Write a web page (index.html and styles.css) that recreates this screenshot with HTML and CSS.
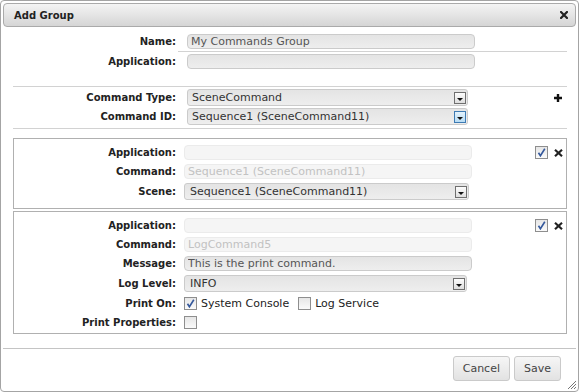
FILE: index.html
```html
<!DOCTYPE html>
<html lang="en">
<head>
  <meta charset="UTF-8" />
  <title>Add Group</title>
  <link rel="stylesheet" href="styles.css">
</head>
<body>
  <div class="dialog">
    <div class="titlebar">
      <span class="title">Add Group</span>
      <span class="close">
        <svg width="8" height="8" viewBox="0 0 8 8"><path d="M1 1L7 7M7 1L1 7" stroke="#222" stroke-width="2.2" stroke-linecap="square"/></svg>
      </span>
    </div>

    <div class="content">
      <div class="row row-top">
        <label class="lbl">Name:</label>
        <div class="cell underline"><input class="txt" type="text" value="My Commands Group"></div>
      </div>
      <div class="row row-app">
        <label class="lbl">Application:</label>
        <div class="cell"><input class="txt" type="text" value=""></div>
      </div>
      <div class="sep sep-1"></div>
      <div class="row row-type">
        <label class="lbl lbl-sel">Command Type:</label>
        <div class="cell">
          <div class="select"><span>SceneCommand</span><span class="drop"></span></div>
          <span class="plus">
            <svg width="8" height="8" viewBox="0 0 8 8"><path d="M4 0V8M0 4H8" stroke="#111" stroke-width="2.4"/></svg>
          </span>
        </div>
      </div>
      <div class="row row-id">
        <label class="lbl lbl-sel">Command ID:</label>
        <div class="cell">
          <div class="select"><span>Sequence1 (SceneCommand11)</span><span class="drop focus"></span></div>
        </div>
      </div>
      <div class="sep sep-2"></div>

      <div class="box box-1">
        <div class="fields">
          <div class="row">
            <label class="lbl">Application:</label>
            <div class="cell"><input class="txt" type="text" value="" disabled></div>
          </div>
          <div class="row">
            <label class="lbl">Command:</label>
            <div class="cell"><input class="txt" type="text" value="Sequence1 (SceneCommand11)" disabled></div>
          </div>
          <div class="row">
            <label class="lbl lbl-sel">Scene:</label>
            <div class="cell">
              <div class="select"><span>Sequence1 (SceneCommand11)</span><span class="drop"></span></div>
            </div>
          </div>
        </div>
        <div class="tools">
          <span class="check on"><svg width="9" height="9" viewBox="0 0 9 9"><path d="M1.5 4.8L3.4 7.8L7.8 0.8" fill="none" stroke="#34589c" stroke-width="1.6"/></svg></span>
          <span class="remove"><svg width="9" height="8" viewBox="0 0 9 8"><path d="M1 0.8L8 7.2M8 0.8L1 7.2" stroke="#222" stroke-width="2.2"/></svg></span>
        </div>
      </div>

      <div class="box box-2">
        <div class="fields">
          <div class="row">
            <label class="lbl">Application:</label>
            <div class="cell"><input class="txt" type="text" value="" disabled></div>
          </div>
          <div class="row">
            <label class="lbl">Command:</label>
            <div class="cell"><input class="txt" type="text" value="LogCommand5" disabled></div>
          </div>
          <div class="row">
            <label class="lbl">Message:</label>
            <div class="cell"><input class="txt" type="text" value="This is the print command."></div>
          </div>
          <div class="row">
            <label class="lbl lbl-sel">Log Level:</label>
            <div class="cell">
              <div class="select select-level"><span>INFO</span><span class="drop"></span></div>
            </div>
          </div>
          <div class="row">
            <label class="lbl">Print On:</label>
            <div class="cell opts">
              <span class="check on"><svg width="9" height="9" viewBox="0 0 9 9"><path d="M1.5 4.8L3.4 7.8L7.8 0.8" fill="none" stroke="#34589c" stroke-width="1.6"/></svg></span>
              <span class="opt">System Console</span>
              <span class="check"></span>
              <span class="opt">Log Service</span>
            </div>
          </div>
          <div class="row">
            <label class="lbl">Print Properties:</label>
            <div class="cell opts"><span class="check"></span></div>
          </div>
        </div>
        <div class="tools">
          <span class="check on"><svg width="9" height="9" viewBox="0 0 9 9"><path d="M1.5 4.8L3.4 7.8L7.8 0.8" fill="none" stroke="#34589c" stroke-width="1.6"/></svg></span>
          <span class="remove"><svg width="9" height="8" viewBox="0 0 9 8"><path d="M1 0.8L8 7.2M8 0.8L1 7.2" stroke="#222" stroke-width="2.2"/></svg></span>
        </div>
      </div>
    </div>

    <div class="footer">
      <button class="btn">Cancel</button>
      <button class="btn">Save</button>
    </div>

    <span class="grip">
      <svg width="9" height="9" viewBox="0 0 9 9"><path d="M9 1L1 9M9 4L4 9M9 7L7 9" stroke="#777" stroke-width="1"/></svg>
    </span>
  </div>
</body>
</html>
```

FILE: styles.css
```css
* {
  box-sizing: border-box;
}
body {
  margin: 0;
  font-family: "DejaVu Sans", Verdana, sans-serif;
  font-size: 11px;
  color: #222;
  background: #fff;
}
.dialog {
  position: relative;
  width: 579px;
  height: 392px;
  border: 1px solid #a4a4a4;
  border-radius: 4px;
  padding: 2px;
  display: flex;
  flex-direction: column;
  background: #fff;
}
.titlebar {
  height: 24px;
  border: 1px solid #aaa;
  border-radius: 4px;
  background: linear-gradient(#f4f4f4, #d5d5d5);
  display: flex;
  align-items: center;
  justify-content: space-between;
  padding: 0 7px 0 10px;
}
.title {
  font-size: 10px;
  font-weight: bold;
  color: #222;
}
.close {
  display: flex;
}

.content {
  flex: 1;
  padding: 7px 9px 0 10px;
}
.row {
  display: flex;
  align-items: center;
}
.row-top {
  align-items: flex-start;
}
.row-app {
  margin-top: 2px;
}
.row-type {
  margin-top: 2px;
}
.row-id {
  margin-top: 2px;
}
.lbl {
  width: 165px;
  padding-right: 2px;
  text-align: right;
  font-size: 10px;
  font-weight: bold;
  line-height: 15px;
  color: #222;
}
.cell {
  flex: 1;
  display: flex;
  align-items: center;
  padding-left: 9px;
}
.underline {
  border-bottom: 1px solid #d2d2d2;
  padding-bottom: 2px;
}
.sep {
  border-top: 1px solid #d2d2d2;
}
.sep-1 {
  margin-top: 17px;
}
.sep-2 {
  margin-top: 3px;
}

.txt {
  width: 288px;
  height: 15px;
  margin: 0;
  padding: 0 3px;
  border: 1px solid #cbcbcb;
  border-radius: 4px;
  background: linear-gradient(#e4e4e4, #eeeeee);
  font-family: "DejaVu Sans", Verdana, sans-serif;
  font-size: 11px;
  color: #555;
  outline: none;
}
.txt:disabled {
  border-color: #ebebeb;
  background: #f5f5f5;
  color: #c2c2c2;
}
.select {
  width: 281px;
  height: 17px;
  display: flex;
  align-items: center;
  padding: 0 1px 0 4px;
  border: 1px solid #cbcbcb;
  border-radius: 3px;
  background: linear-gradient(#e4e4e4, #eeeeee);
  color: #333;
}
.drop {
  margin-left: auto;
  width: 12px;
  height: 12px;
  border: 1px solid #6f6f6f;
  background: linear-gradient(#fdfdfd, #dedede);
  display: flex;
  align-items: flex-end;
  justify-content: center;
  padding-bottom: 2px;
}
.drop::after {
  content: "";
  border-left: 3px solid transparent;
  border-right: 3px solid transparent;
  border-top: 3px solid #111;
}
.drop.focus {
  border-color: #3d7ab3;
  background: linear-gradient(#e3f2fc, #b8dcf4);
}
.plus {
  display: flex;
  margin-left: auto;
  margin-right: 5px;
}

.box {
  display: flex;
  border: 1px solid #b0b0b0;
}
.box-1 {
  margin-top: 9px;
  padding: 6px 3px 8px 0;
}
.box-2 {
  margin-top: 2px;
  padding: 6px 3px 3px 0;
}
.fields {
  flex: 1;
  display: flex;
  flex-direction: column;
  gap: 4px;
}
.box .lbl {
  width: 164px;
}
.box .cell {
  padding-left: 6px;
}
.box .select {
  width: 285px;
}
.box .select-level {
  width: 283px;
}
.box .select span:first-child {
  padding-left: 1px;
}
.tools {
  display: flex;
  align-items: center;
  gap: 6px;
  height: 13px;
  margin-top: 1px;
}
.remove {
  display: flex;
}

.check {
  width: 13px;
  height: 13px;
  border: 1px solid #8e8e8e;
  background: linear-gradient(#e6e6e6, #fafafa);
  display: inline-flex;
  align-items: center;
  justify-content: center;
}
.opts {
  height: 15px;
}
.opt {
  margin-left: 4px;
  margin-right: 9px;
  color: #222;
}

.footer {
  height: 41px;
  border-top: 1px solid #c4c4c4;
  padding: 7px 15px 0 0;
  display: flex;
  justify-content: flex-end;
  align-items: flex-start;
  gap: 4px;
}
.btn {
  height: 25px;
  padding: 0 9px;
  border: 1px solid #cacaca;
  border-radius: 3px;
  background: linear-gradient(#f6f6f6, #e2e2e2);
  font-family: "DejaVu Sans", Verdana, sans-serif;
  font-size: 11px;
  color: #444;
}
.grip {
  position: absolute;
  right: 2px;
  bottom: 2px;
  display: flex;
}
```
